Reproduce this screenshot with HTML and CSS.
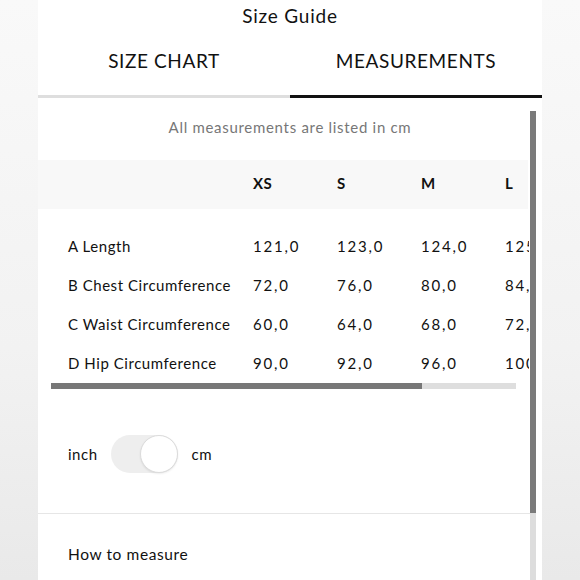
FILE: index.html
```html
<!DOCTYPE html>
<html lang="en">
<head>
<meta charset="utf-8">
<title>Size Guide</title>
<link rel="stylesheet" href="styles.css">
</head>
<body>
<div class="panel">
  <header class="title">Size Guide</header>
  <nav class="tabs">
    <div class="tab">SIZE CHART</div>
    <div class="tab active">MEASUREMENTS</div>
  </nav>
  <div class="body">
    <div class="content">
      <p class="note">All measurements are listed in cm</p>
      <div class="table-wrap">
        <div class="row head">
          <div class="label"></div>
          <div class="cell">XS</div>
          <div class="cell">S</div>
          <div class="cell">M</div>
          <div class="cell">L</div>
        </div>
        <div class="rows">
          <div class="row">
            <div class="label">A Length</div>
            <div class="cell num">121,0</div>
            <div class="cell num">123,0</div>
            <div class="cell num">124,0</div>
            <div class="cell num">125,0</div>
          </div>
          <div class="row">
            <div class="label">B Chest Circumference</div>
            <div class="cell num">72,0</div>
            <div class="cell num">76,0</div>
            <div class="cell num">80,0</div>
            <div class="cell num">84,0</div>
          </div>
          <div class="row">
            <div class="label">C Waist Circumference</div>
            <div class="cell num">60,0</div>
            <div class="cell num">64,0</div>
            <div class="cell num">68,0</div>
            <div class="cell num">72,0</div>
          </div>
          <div class="row">
            <div class="label">D Hip Circumference</div>
            <div class="cell num">90,0</div>
            <div class="cell num">92,0</div>
            <div class="cell num">96,0</div>
            <div class="cell num">100,0</div>
          </div>
        </div>
      </div>
      <div class="hscroll"><div class="hthumb"></div></div>
      <div class="units">
        <span class="unit">inch</span>
        <span class="toggle"><span class="knob"></span></span>
        <span class="unit">cm</span>
      </div>
      <div class="howto">How to measure</div>
    </div>
    <div class="vscroll"><div class="vthumb"></div></div>
  </div>
</div>
</body>
</html>
```
FILE: styles.css
```css
html, body {
  margin: 0;
  padding: 0;
  height: 100%;
}
body {
  background: linear-gradient(to bottom, #f9f9f9 0%, #f2f2f2 60%, #e9e9e9 100%);
  font-family: Lato, "Open Sans", sans-serif;
  color: #111;
  overflow: hidden;
}
.panel {
  margin-left: 38px;
  width: 504px;
  height: 580px;
  background: #fff;
  display: flex;
  flex-direction: column;
}
.title {
  height: 32px;
  line-height: 32px;
  text-align: center;
  font-size: 19px;
  letter-spacing: 0.8px;
}
.tabs {
  display: flex;
}
.tab {
  flex: 1;
  text-align: center;
  font-size: 19px;
  letter-spacing: 0.6px;
  line-height: 24px;
  padding: 17px 0 22px;
  border-bottom: 3px solid #dedede;
}
.tab.active {
  border-bottom-color: #111;
}
.body {
  display: flex;
  flex: 1;
  min-height: 0;
}
.content {
  width: 492px;
  overflow: hidden;
}
.note {
  margin: 0;
  padding: 19px 0 23px 12px;
  line-height: 20px;
  text-align: center;
  font-size: 15px;
  color: #777;
  letter-spacing: 0.7px;
}
.table-wrap {
  width: 491px;
  overflow: hidden;
}
.row {
  display: flex;
  width: max-content;
  height: 39px;
  align-items: center;
  font-size: 15px;
  letter-spacing: 0.55px;
}
.row.head {
  box-sizing: border-box;
  height: 49px;
  width: 490px;
  padding-bottom: 3px;
  background: #f8f8f8;
  font-weight: 700;
}
.rows {
  padding: 17px 0 0;
}
.label {
  flex: none;
  width: 185px;
  padding-left: 30px;
}
.cell {
  flex: none;
  width: 84px;
  white-space: nowrap;
}
.cell.num {
  letter-spacing: 1.8px;
}
.hscroll {
  margin: 1px 0 0 13px;
  width: 465px;
  height: 6px;
  background: #dedede;
}
.hthumb {
  width: 371px;
  height: 100%;
  background: #777;
}
.units {
  height: 118px;
  padding: 6px 30px 0;
  display: flex;
  align-items: center;
  border-bottom: 1px solid #e6e6e6;
  font-size: 15px;
  letter-spacing: 0.5px;
}
.toggle {
  position: relative;
  width: 67px;
  height: 38px;
  border-radius: 19px;
  background: #eeeeee;
  margin: 0 14px 0 13px;
}
.knob {
  position: absolute;
  right: 0;
  top: 0;
  width: 36px;
  height: 36px;
  border-radius: 50%;
  background: #fff;
  border: 1px solid #dcdcdc;
  box-shadow: 0 1px 2px rgba(0,0,0,0.08);
}
.howto {
  padding: 30px 30px 0;
  line-height: 20px;
  font-size: 15.5px;
  letter-spacing: 0.6px;
}
.vscroll {
  width: 6px;
  margin-top: 13px;
  background: #dddddd;
  display: flex;
  flex-direction: column;
}
.vthumb {
  height: 402px;
  background: #7a7a7a;
}
```
